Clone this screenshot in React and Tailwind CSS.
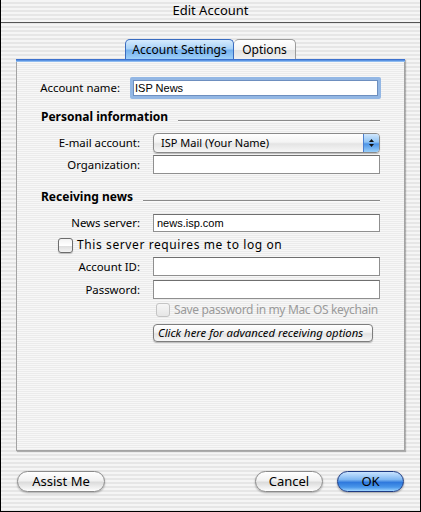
import React from 'react'

const Field = ({ value, className = '' }) => (
  <div className={`h-full w-[227px] border border-[#8f8f8f] border-t-[#6f6f6f] bg-white flex items-center pl-[3px] font-['Liberation_Sans',sans-serif] text-[11px] ${className}`}>
    {value}
  </div>
)

const Label = ({ children, w = 'w-[123px]' }) => (
  <div className={`${w} text-right text-[11.4px] shrink-0`}>{children}</div>
)

const Heading = ({ children }) => (
  <div className="h-[14px] flex items-center pl-[24px]">
    <span className="text-[12px] font-bold">{children}</span>
    <div className="flex-1 ml-[10px] mr-[24px] mt-[7px] border-t border-[#8a8a8a] border-b border-b-[#fafafa]" />
  </div>
)

const Checkbox = ({ disabled }) => (
  <div
    className={
      disabled
        ? 'w-[14px] h-[14px] rounded-[3px] border border-[#c4c4c4] bg-[linear-gradient(to_bottom,#f6f6f6,#e6e6e6)] shrink-0'
        : 'w-[15px] h-[15px] rounded-[3px] border border-[#6d6d6d] bg-[linear-gradient(to_bottom,#f2f2f2,#ffffff_50%,#dedede_55%,#f4f4f4)] shadow-[0_1px_1px_rgba(0,0,0,0.2)] shrink-0'
    }
  />
)

const Pill = ({ children, className = '', blue }) => (
  <div
    className={
      blue
        ? `h-[21px] rounded-full border border-[#1d3a82] bg-[linear-gradient(to_bottom,#c9e4ff_0%,#7fb7f2_40%,#2f79dd_55%,#4a97ea_80%,#9fd5ff_100%)] shadow-[0_1px_2px_rgba(0,0,0,0.35)] flex items-center justify-center text-[13px] ${className}`
        : `h-[21px] rounded-full border border-[#8a8a8a] bg-[linear-gradient(to_bottom,#ffffff_0%,#f1f1f1_45%,#dcdcdc_55%,#f2f2f2_85%,#ffffff_100%)] shadow-[0_1px_2px_rgba(0,0,0,0.3)] flex items-center justify-center text-[13px] ${className}`
    }
  >
    {children}
  </div>
)

export default function App() {
  return (
    <div className="w-[421px] h-[512px] border-x border-b border-black flex flex-col font-['Noto_Sans',sans-serif] text-black bg-[repeating-linear-gradient(to_bottom,#f5f5f5_0px,#f5f5f5_2px,#e6e6e6_2px,#e6e6e6_4px)] overflow-hidden">
      {/* Title bar */}
      <div className="h-[23px] border-b border-[#555] flex items-center justify-center text-[13px] shrink-0">
        Edit Account
      </div>

      {/* Tabs */}
      <div className="mt-[16px] flex justify-center h-[20px] shrink-0">
        <div className="w-[109px] rounded-t-[5px] border border-b-0 border-[#3a6cc0] bg-[linear-gradient(to_bottom,#d6ebfd_0%,#a9d2f7_45%,#74b1ee_55%,#9fd0f8_100%)] flex items-center justify-center text-[12px]">
          Account Settings
        </div>
        <div className="w-[62px] rounded-t-[5px] border border-b-0 border-l-0 border-[#9b9b9b] bg-[linear-gradient(to_bottom,#ffffff_0%,#f3f3f3_50%,#e2e2e2_55%,#f0f0f0_100%)] flex items-center justify-center text-[12px]">
          Options
        </div>
      </div>

      {/* Panel */}
      <div className="ml-[15px] w-[389px] h-[392px] flex flex-col shrink-0 shadow-[1px_1px_1px_rgba(0,0,0,0.25)]">
        <div className="h-[3px] bg-[linear-gradient(to_bottom,#2f62c4,#5b93e2,#a9cff5)] shrink-0" />
        <div className="flex-1 border-x border-b border-[#a3a3a3] bg-[repeating-linear-gradient(to_bottom,#f7f7f7_0px,#f7f7f7_1px,#ebebeb_1px,#ebebeb_2px)] flex flex-col">
          {/* Account name */}
          <div className="mt-[15px] h-[22px] flex items-center">
            <Label w="w-[103px]">Account name:</Label>
            <div className="ml-[10px] w-[251px] h-full border-[3px] border-[#93b7e4] rounded-[2px] bg-white flex items-center pl-[2px] font-['Liberation_Sans',sans-serif] text-[11px] shadow-[inset_0_0_0_1px_#6e8fbf]">
              ISP News
            </div>
          </div>

          <div className="mt-[11px]">
            <Heading>Personal information</Heading>
          </div>

          {/* E-mail account */}
          <div className="mt-[9px] h-[20px] flex items-center">
            <Label>E-mail account:</Label>
            <div className="ml-[13px] w-[227px] h-full rounded-[4px] border border-[#8a8a8a] bg-[linear-gradient(to_bottom,#ffffff_0%,#f4f4f4_45%,#e4e4e4_55%,#f7f7f7_100%)] flex shadow-[0_1px_1px_rgba(0,0,0,0.2)] overflow-hidden">
              <div className="flex-1 flex items-center pl-[7px] text-[11px]">ISP Mail (Your Name)</div>
              <div className="w-[16px] h-full border-l border-[#4c7fcf] bg-[linear-gradient(to_bottom,#d0e7fd_0%,#8fc3f4_45%,#4b93e6_55%,#9ad0fa_100%)] flex flex-col items-center justify-center gap-[2px]">
                <svg width="5" height="3" viewBox="0 0 5 3"><path d="M2.5 0L5 3H0z" fill="#111" /></svg>
                <svg width="5" height="3" viewBox="0 0 5 3"><path d="M0 0h5L2.5 3z" fill="#111" /></svg>
              </div>
            </div>
          </div>

          {/* Organization */}
          <div className="mt-[2px] h-[19px] flex items-center">
            <Label>Organization:</Label>
            <div className="ml-[13px] h-full"><Field value="" /></div>
          </div>

          <div className="mt-[16px]">
            <Heading>Receiving news</Heading>
          </div>

          {/* News server */}
          <div className="mt-[10px] h-[18px] flex items-center">
            <Label>News server:</Label>
            <div className="ml-[13px] h-full"><Field value="news.isp.com" /></div>
          </div>

          {/* Log on checkbox */}
          <div className="mt-[5px] h-[16px] flex items-center pl-[41px]">
            <Checkbox />
            <span className="ml-[4px] text-[12px] tracking-[0.6px]">This server requires me to log on</span>
          </div>

          {/* Account ID */}
          <div className="mt-[4px] h-[19px] flex items-center">
            <Label>Account ID:</Label>
            <div className="ml-[13px] h-full"><Field value="" /></div>
          </div>

          {/* Password */}
          <div className="mt-[4px] h-[19px] flex items-center">
            <Label>Password:</Label>
            <div className="ml-[13px] h-full"><Field value="" /></div>
          </div>

          {/* Keychain */}
          <div className="mt-[3px] h-[15px] flex items-center pl-[139px]">
            <Checkbox disabled />
            <span className="ml-[4px] text-[12px] tracking-[-0.35px] text-[#9a9a9a]">Save password in my Mac OS keychain</span>
          </div>

          {/* Advanced button */}
          <div className="mt-[7px] h-[18px] pl-[136px] flex">
            <div className="w-[220px] h-full rounded-[4px] border border-[#7d7d7d] bg-[linear-gradient(to_bottom,#ffffff_0%,#f3f3f3_45%,#e3e3e3_55%,#f6f6f6_100%)] shadow-[0_1px_1px_rgba(0,0,0,0.25)] flex items-center pl-[4px] text-[11.3px] italic">
              Click here for advanced receiving options
            </div>
          </div>
        </div>
      </div>

      {/* Bottom buttons */}
      <div className="mt-[20px] flex items-center px-[16px]">
        <Pill className="w-[88px]">Assist Me</Pill>
        <div className="flex-1" />
        <Pill className="w-[68px]">Cancel</Pill>
        <Pill className="w-[67px] ml-[14px]" blue>OK</Pill>
      </div>
    </div>
  )
}
